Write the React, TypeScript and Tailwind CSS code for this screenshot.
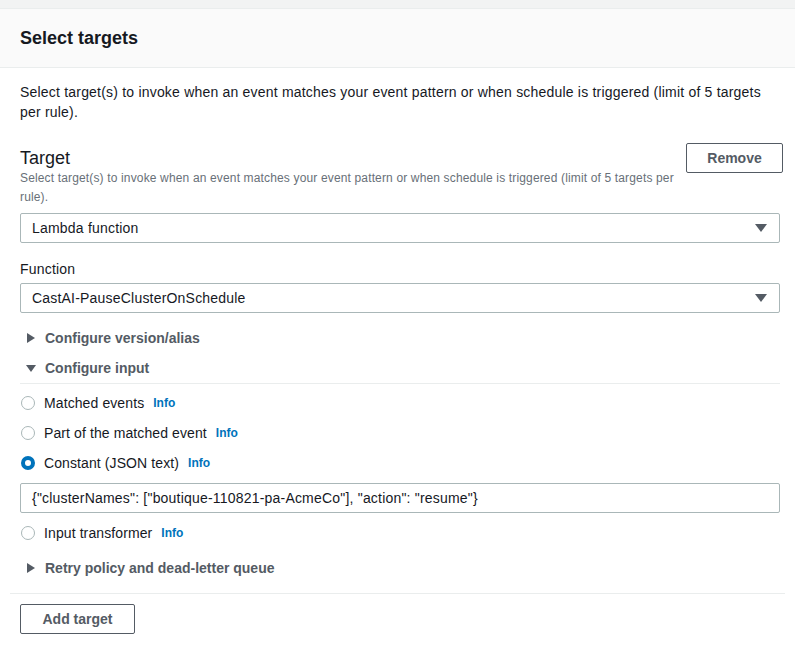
const font = { fontFamily: '"Liberation Sans", Arial, sans-serif' };

function Caret({ open }: { open?: boolean }) {
    return (
        <svg width="10" height="10" viewBox="0 0 10 10" className="shrink-0">
            {open ? <polygon points="0,2 10,2 5,9" fill="#545b64" /> : <polygon points="1,0 9,5 1,10" fill="#545b64" />}
        </svg>
    );
}

function Select({ value }: { value: string }) {
    return (
        <div className="flex items-center justify-between h-[30px] border border-[#aab7b8] rounded-[2px] pl-[11px] pr-[12px] text-[14px] tracking-[0.2px] text-[#16191f]">
            <span>{value}</span>
            <svg width="12" height="8" viewBox="0 0 12 8">
                <polygon points="0,0 12,0 6,8" fill="#545b64" />
            </svg>
        </div>
    );
}

function Radio({ label, checked }: { label: string; checked?: boolean }) {
    return (
        <div className="flex items-center h-[30px]">
            <span
                className={
                    checked
                        ? "w-[14px] h-[14px] rounded-full border-[4px] border-[#0073bb] bg-white ml-[1px]"
                        : "w-[14px] h-[14px] rounded-full border-[1.5px] border-[#aab7b8] bg-white ml-[1px]"
                }
            />
            <span className="ml-[9px] text-[14px] tracking-[0.1px] text-[#16191f]">{label}</span>
            <span className="ml-[9px] text-[12px] font-bold text-[#0073bb]">Info</span>
        </div>
    );
}

function Expander({ label, open }: { label: string; open?: boolean }) {
    return (
        <div className="flex items-center h-[30px] pl-[6px]">
            <Caret open={open} />
            <span className="ml-[9px] text-[14px] font-bold text-[#545b64]">{label}</span>
        </div>
    );
}

export default function App() {
    return (
        <div className="w-[795px] h-[654px] bg-white" style={font}>
            <div className="h-[9px] bg-[#f2f3f3] border-b border-[#eaeded]" />
            <div className="h-[59px] bg-[#fafafa] border-b border-[#eaeded] flex items-center px-[20px]">
                <h2 className="text-[18px] font-bold text-[#16191f]">Select targets</h2>
            </div>

            <div className="pl-[20px] pr-[15px] pt-[14px]">
                <p className="text-[14px] leading-[20px] tracking-[0.2px] text-[#16191f] pr-[10px]">
                    Select target(s) to invoke when an event matches your event pattern or when schedule is triggered (limit of 5 targets per rule).
                </p>

                <div className="flex justify-between mt-[21px]">
                    <div className="pt-[4px]">
                        <div className="text-[18px] leading-[22px] text-[#16191f]">Target</div>
                        <div className="text-[12px] leading-[19px] tracking-[0.15px] text-[#687078] w-[660px]">
                            Select target(s) to invoke when an event matches your event pattern or when schedule is triggered (limit of 5 targets per rule).
                        </div>
                    </div>
                    <button className="h-[30px] w-[97px] border border-[#545b64] rounded-[2px] text-[14px] font-bold text-[#545b64] mr-[-3px]">
                        Remove
                    </button>
                </div>

                <div className="mt-[6px]">
                    <Select value="Lambda function" />
                </div>

                <div className="mt-[16px] text-[14px] leading-[20px] tracking-[0.2px] text-[#16191f]">Function</div>
                <div className="mt-[4px]">
                    <Select value="CastAI-PauseClusterOnSchedule" />
                </div>

                <div className="mt-[10px]">
                    <Expander label="Configure version/alias" />
                    <Expander label="Configure input" open />
                </div>
                <div className="border-t border-[#eaeded]" />

                <div className="mt-[4px]">
                    <Radio label="Matched events" />
                    <Radio label="Part of the matched event" />
                    <Radio label="Constant (JSON text)" checked />
                </div>
                <div className="mt-[5px] h-[30px] border border-[#aab7b8] rounded-[2px] flex items-center pl-[11px] text-[14px] tracking-[0.2px] text-[#16191f]">
                    {'{"clusterNames": ["boutique-110821-pa-AcmeCo"], "action": "resume"}'}
                </div>
                <div className="mt-[5px]">
                    <Radio label="Input transformer" />
                </div>
                <div className="mt-[5px]">
                    <Expander label="Retry policy and dead-letter queue" />
                </div>
            </div>

            <div className="mx-[10px] mt-[10px] border-t border-[#eaeded]" />
            <div className="px-[20px] pt-[10px]">
                <button className="h-[30px] w-[115px] border border-[#545b64] rounded-[2px] text-[14px] font-bold text-[#545b64]">
                    Add target
                </button>
            </div>
        </div>
    );
}
